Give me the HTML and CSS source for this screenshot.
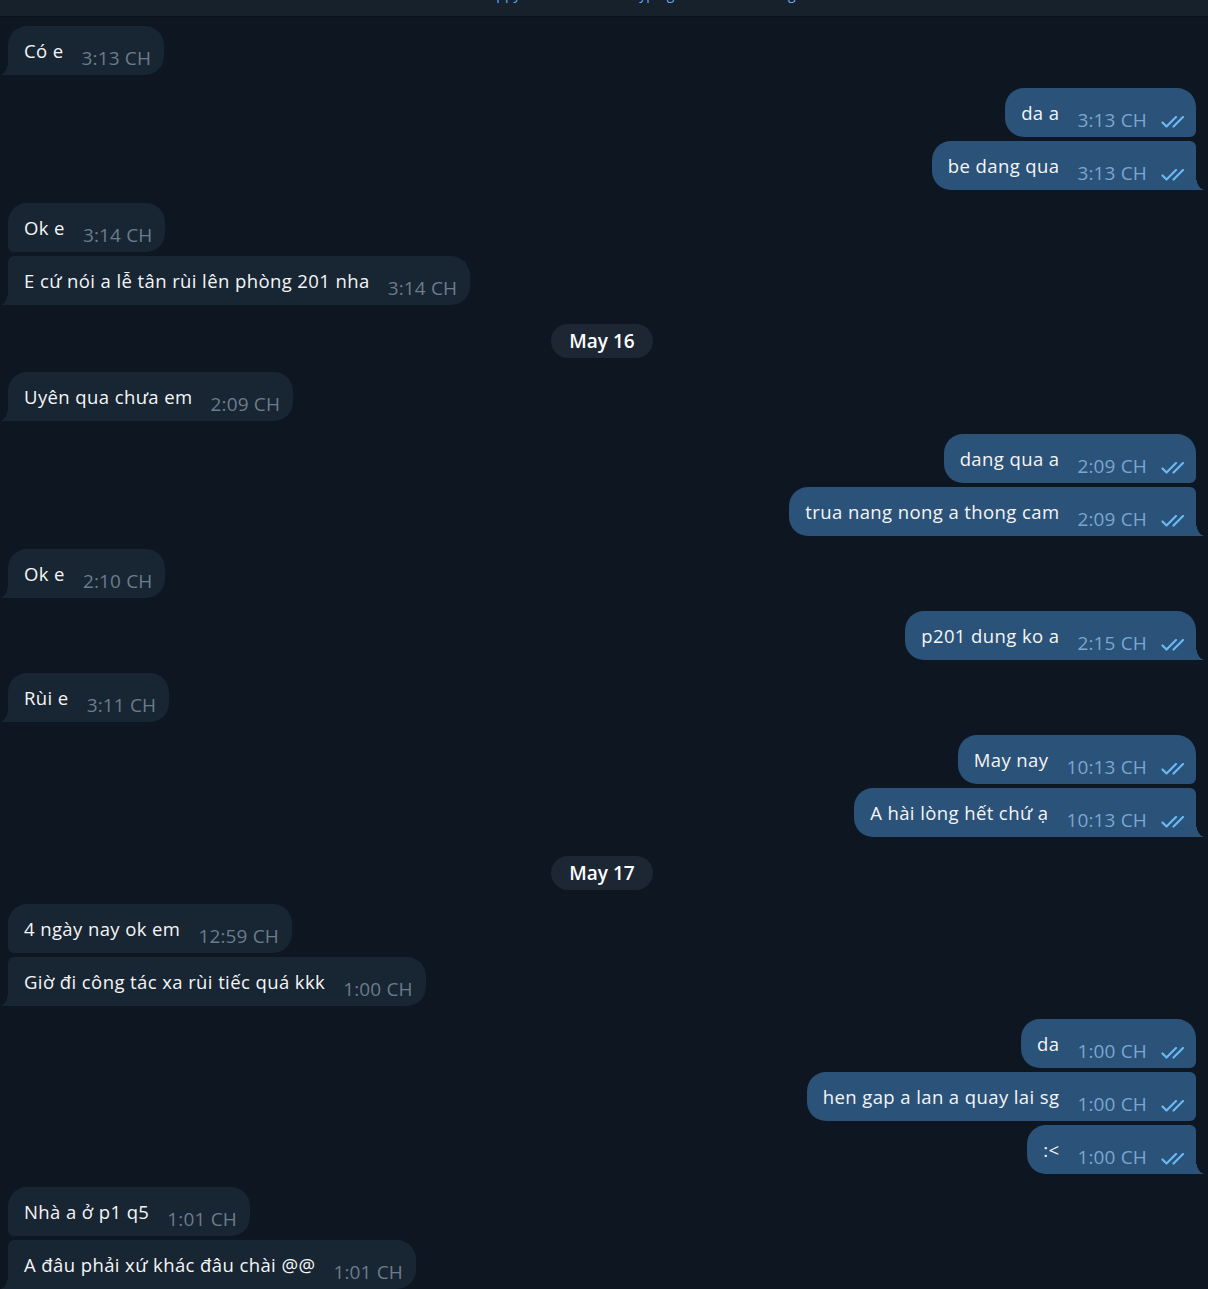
FILE: index.html
```html
<!DOCTYPE html>
<html lang="vi">
<head>
<meta charset="utf-8">
<title>Chat</title>
<link rel="stylesheet" href="styles.css">
</head>
<body>
<div class="topbar"><span class="status">happy typing g</span></div>
<div class="chat">
  <div class="group in">
    <div class="bubble first last"><span class="text">Có e</span><span class="time">3:13 CH</span></div>
  </div>
  <div class="group out">
    <div class="bubble first"><span class="text">da a</span><span class="time">3:13 CH</span><svg class="check" viewBox="0 0 27 12"><path d="M1.5 6.5 L5.5 10.5 L15 1 M12.5 10.5 L22 1"/></svg></div>
    <div class="bubble last"><span class="text">be dang qua</span><span class="time">3:13 CH</span><svg class="check" viewBox="0 0 27 12"><path d="M1.5 6.5 L5.5 10.5 L15 1 M12.5 10.5 L22 1"/></svg></div>
  </div>
  <div class="group in">
    <div class="bubble first"><span class="text">Ok e</span><span class="time">3:14 CH</span></div>
    <div class="bubble last"><span class="text">E cứ nói a lễ tân rùi lên phòng 201 nha</span><span class="time">3:14 CH</span></div>
  </div>
  <div class="date"><span>May 16</span></div>
  <div class="group in">
    <div class="bubble first last"><span class="text">Uyên qua chưa em</span><span class="time">2:09 CH</span></div>
  </div>
  <div class="group out">
    <div class="bubble first"><span class="text">dang qua a</span><span class="time">2:09 CH</span><svg class="check" viewBox="0 0 27 12"><path d="M1.5 6.5 L5.5 10.5 L15 1 M12.5 10.5 L22 1"/></svg></div>
    <div class="bubble last"><span class="text">trua nang nong a thong cam</span><span class="time">2:09 CH</span><svg class="check" viewBox="0 0 27 12"><path d="M1.5 6.5 L5.5 10.5 L15 1 M12.5 10.5 L22 1"/></svg></div>
  </div>
  <div class="group in">
    <div class="bubble first last"><span class="text">Ok e</span><span class="time">2:10 CH</span></div>
  </div>
  <div class="group out">
    <div class="bubble first last"><span class="text">p201 dung ko a</span><span class="time">2:15 CH</span><svg class="check" viewBox="0 0 27 12"><path d="M1.5 6.5 L5.5 10.5 L15 1 M12.5 10.5 L22 1"/></svg></div>
  </div>
  <div class="group in">
    <div class="bubble first last"><span class="text">Rùi e</span><span class="time">3:11 CH</span></div>
  </div>
  <div class="group out">
    <div class="bubble first"><span class="text">May nay</span><span class="time">10:13 CH</span><svg class="check" viewBox="0 0 27 12"><path d="M1.5 6.5 L5.5 10.5 L15 1 M12.5 10.5 L22 1"/></svg></div>
    <div class="bubble last"><span class="text">A hài lòng hết chứ ạ</span><span class="time">10:13 CH</span><svg class="check" viewBox="0 0 27 12"><path d="M1.5 6.5 L5.5 10.5 L15 1 M12.5 10.5 L22 1"/></svg></div>
  </div>
  <div class="date"><span>May 17</span></div>
  <div class="group in">
    <div class="bubble first"><span class="text">4 ngày nay ok em</span><span class="time">12:59 CH</span></div>
    <div class="bubble last"><span class="text">Giờ đi công tác xa rùi tiếc quá kkk</span><span class="time">1:00 CH</span></div>
  </div>
  <div class="group out">
    <div class="bubble first"><span class="text">da</span><span class="time">1:00 CH</span><svg class="check" viewBox="0 0 27 12"><path d="M1.5 6.5 L5.5 10.5 L15 1 M12.5 10.5 L22 1"/></svg></div>
    <div class="bubble"><span class="text">hen gap a lan a quay lai sg</span><span class="time">1:00 CH</span><svg class="check" viewBox="0 0 27 12"><path d="M1.5 6.5 L5.5 10.5 L15 1 M12.5 10.5 L22 1"/></svg></div>
    <div class="bubble last"><span class="text">:&lt;</span><span class="time">1:00 CH</span><svg class="check" viewBox="0 0 27 12"><path d="M1.5 6.5 L5.5 10.5 L15 1 M12.5 10.5 L22 1"/></svg></div>
  </div>
  <div class="group in">
    <div class="bubble first"><span class="text">Nhà a ở p1 q5</span><span class="time">1:01 CH</span></div>
    <div class="bubble last"><span class="text">A đâu phải xứ khác đâu chài @@</span><span class="time">1:01 CH</span></div>
  </div>
</div>
</body>
</html>
```
FILE: styles.css
```css
html, body {
  margin: 0;
  padding: 0;
  background: #0e1621;
  height: 1289px;
  overflow: hidden;
}
body {
  font-family: "Open Sans", "Noto Sans", sans-serif;
  color: #f5f5f5;
}
.topbar {
  height: 16px;
  background: #17212b;
  border-bottom: 1px solid #0a1017;
  overflow: hidden;
}
.status {
  display: block;
  font-size: 14px;
  line-height: 14px;
  color: #5eaae6;
  margin-top: -13px;
  padding-left: 480px;
  word-spacing: 110px;
}
.chat {
  display: flex;
  flex-direction: column;
  padding-top: 9px;
}
.group {
  display: flex;
  flex-direction: column;
  gap: 4px;
  margin-bottom: 13px;
}
.group.in {
  align-items: flex-start;
  padding-left: 8px;
}
.group.out {
  align-items: flex-end;
  padding-right: 12px;
}
.bubble {
  position: relative;
  height: 49px;
  box-sizing: border-box;
  display: flex;
  align-items: flex-start;
}
.in .bubble {
  background: #182533;
  padding: 0 13px 0 16px;
  border-radius: 6px 19px 19px 6px;
}
.out .bubble {
  background: #2b5278;
  padding: 0 8px 0 16px;
  border-radius: 19px 6px 6px 19px;
}
.in .bubble.first { border-top-left-radius: 19px; }
.out .bubble.first { border-top-right-radius: 19px; }
.in .bubble.last { border-bottom-left-radius: 0; }
.out .bubble.last { border-bottom-right-radius: 0; }
.in .bubble.last::before {
  content: "";
  position: absolute;
  left: -8px;
  bottom: 0;
  width: 8px;
  height: 14px;
  background: radial-gradient(8px 14px at 0 0, transparent 98%, #182533 100%);
}
.out .bubble.last::before {
  content: "";
  position: absolute;
  right: -9px;
  bottom: 0;
  width: 9px;
  height: 14px;
  background: radial-gradient(9px 14px at 100% 0, transparent 98%, #2b5278 100%);
}
.text {
  font-size: 18.5px;
  letter-spacing: 0.4px;
  line-height: 24px;
  padding-top: 13px;
  white-space: nowrap;
}
.time {
  font-size: 19px;
  letter-spacing: 0.15px;
  line-height: 24px;
  padding-top: 20px;
  margin-left: 18px;
  white-space: nowrap;
}
.in .time { color: #6b7c8c; }
.out .time { color: #7aa6d2; }
.check {
  width: 27px;
  height: 12px;
  margin-top: 28px;
  margin-left: 14px;
  fill: none;
  stroke: #6cb8f2;
  stroke-width: 2.2;
  stroke-linecap: round;
  stroke-linejoin: round;
}
.date {
  display: flex;
  justify-content: center;
  margin-top: 6px;
  margin-bottom: 14px;
  padding-right: 4px;
}
.date span {
  background: #1c2733;
  height: 34px;
  padding: 0 18px;
  border-radius: 17px;
  font-size: 19px;
  font-weight: 600;
  line-height: 34px;
  color: #ffffff;
}
```
